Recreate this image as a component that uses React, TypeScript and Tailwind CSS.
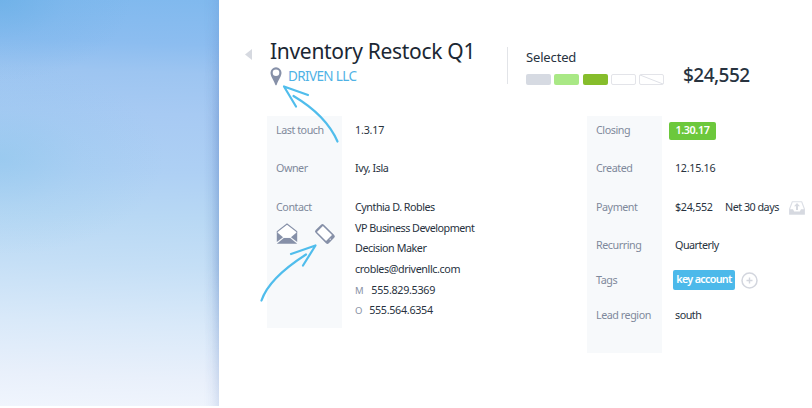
import type { ReactNode } from "react";

function Label({ children, className = "" }: { children: ReactNode; className?: string }) {
  return <div className={`h-5 whitespace-nowrap text-[10.75px] leading-5 tracking-[-0.46px] text-[#7f899c] ${className}`}>{children}</div>;
}

function Value({ children, className = "" }: { children: ReactNode; className?: string }) {
  return <div className={`flex h-5 items-center whitespace-nowrap text-[10.75px] leading-5 text-[#28323e] ${className}`}>{children}</div>;
}

function Pin() {
  return (
    <svg width="12" height="19" viewBox="0 0 12 19" className="shrink-0">
      <path fillRule="evenodd" fill="#8690a8" d="M6 .3A5.500 5.500 0 0 0 .5 5.800c0 3.400 2.800 6.700 4.800 12 .2.7 1.200.7 1.400 0 2-5.300 4.800-8.600 4.800-12A5.500 5.500 0 0 0 6 .3Zm0 2.200a3.300 3.300 0 1 1 0 6.600 3.300 3.300 0 0 1 0-6.600Z" />
    </svg>
  );
}

function Envelope() {
  return (
    <svg width="22" height="21" viewBox="0 0 22 21">
      <path d="M1.500 8.700 11 1l9.500 7.700-5.500 5.300H7Z" fill="#fff" />
      <path d="M1.300 9.500V8.500L11 1l9.700 7.500v1" fill="none" stroke="#8690a8" strokeWidth="1.100" />
      <path d="M.8 9 7 14.200.8 19ZM21.200 9 15 14.200l6.200 4.800ZM.8 20.700 7.800 15h6.400l7 5.700Z" fill="#8690a8" />
    </svg>
  );
}

function Phone() {
  return (
    <svg width="22" height="22" viewBox="0 0 22 22">
      <g transform="translate(11 11) rotate(-45)">
        <rect x="-5.800" y="-9.400" width="11.600" height="18.600" rx="2" fill="#8690a8" />
        <rect x="-4.200" y="-7.200" width="8.400" height="12.900" fill="#fff" />
        <circle cx="0" cy="7.400" r=".6" fill="#fff" />
      </g>
    </svg>
  );
}

function Tray() {
  return (
    <svg width="16" height="14" viewBox="0 0 16 14" className="mt-[2px] shrink-0">
      <path d="M3.300.7h9.400L15.400 8v5.300H.6V8Z" fill="#fff" stroke="#dcdfe6" strokeWidth="1.100" strokeLinejoin="round" />
      <path d="M.6 8.300H4l1.200 2.200h5.600L12 8.300h3.400v5H.6Z" fill="#d6d9e0" />
      <path d="M8 2 5 5.200h2V9h2V5.200h2Z" fill="#d6d9e0" />
    </svg>
  );
}

function AddTag() {
  return (
    <svg width="17" height="17" viewBox="0 0 17 17" className="ml-[6px] shrink-0">
      <circle cx="8.500" cy="8.500" r="7.500" fill="none" stroke="#d3d6de" strokeWidth="1.500" />
      <path d="M8.500 5.500v6M5.500 8.500h6" stroke="#d3d6de" strokeWidth="1.400" />
    </svg>
  );
}

export default function App() {
  return (
    <div className="relative flex h-[408px] w-[812px] overflow-hidden bg-white font-['Noto_Sans',sans-serif]">
      <aside className="flex h-[406px] w-[219px] shrink-0 justify-end bg-[radial-gradient(ellipse_60%_20%_at_0%_0%,#5fabe380_0%,#5fabe326_50%,#5fabe300_100%),radial-gradient(ellipse_75%_24%_at_0%_39%,#84c4ea73_0%,#84c4ea26_50%,#84c4ea00_100%),linear-gradient(182deg,#80b9ee_0%,#8cbdf0_11%,#9dc5f1_18%,#a7caf3_28%,#aed0f4_42%,#b8d8f4_53%,#c5dff6_65%,#d9e9f9_79%,#e9f0fb_92%,#f0f5fd_100%)]">
        <div className="w-[15px] bg-linear-to-r from-[#5078bc00] via-[#5078bc1a] to-[#5078bc5c] [mask-image:linear-gradient(to_bottom,#0005_0%,#000_30%,#000_65%,#0006_100%)]" />
      </aside>

      <main className="flex min-w-0 flex-1 flex-col">
        <header className="flex h-[116px]">
          <div className="ml-[26px] mt-[49px] h-[11px] w-[7px] bg-[#d6d9e0] [clip-path:polygon(100%_0,100%_100%,0_50%)]" />
          <div className="ml-[18px] w-[237px] pt-[36px]">
            <h1 className="h-[30px] whitespace-nowrap text-[21px] leading-[30px] tracking-[-0.3px] text-[#1b2733]">Inventory Restock Q1</h1>
            <div className="flex h-5 items-center gap-[6px]">
              <Pin />
              <span className="whitespace-nowrap text-[13.5px] leading-5 tracking-[-0.62px] text-[#4fb2e5]">DRIVEN LLC</span>
            </div>
          </div>
          <div className="mt-[47px] h-[37px] w-px bg-[#e2e4e8]" />
          <div className="ml-[18px] w-[157px] pt-[47px]">
            <div className="h-5 text-[13px] leading-5 tracking-[-0.15px] text-[#28333f]">Selected</div>
            <div className="mt-[7px] flex gap-[3.3px]">
              <div className="h-[11px] w-[25px] rounded-[2px] bg-[#d6dae2]" />
              <div className="h-[11px] w-[25px] rounded-[2px] bg-[#a9e885]" />
              <div className="h-[11px] w-[25px] rounded-[2px] bg-[#86bd2b]" />
              <div className="h-[11px] w-[25px] rounded-[2px] border border-[#e3e4e9]" />
              <div className="h-[11px] w-[25px] rounded-[2px] border border-[#e3e4e9]">
                <svg width="23" height="9" viewBox="0 0 23 9"><path d="M0 0 23 9" stroke="#dfe1e7" /></svg>
              </div>
            </div>
          </div>
          <div className="mt-[61px] whitespace-nowrap text-[19px] font-medium leading-7 tracking-[-0.55px] text-[#28333f]">$24,552</div>
        </header>

        <div className="flex pl-[48px]">
          <section className="flex w-[320px]">
            <div className="h-[212px] w-[75px] shrink-0 bg-[#f7f9fb] pl-[9px] pt-[4px]">
              <Label>Last touch</Label>
              <Label className="mt-[18px]">Owner</Label>
              <Label className="mt-[19px]">Contact</Label>
              <div className="mt-[6px] flex gap-[16px]">
                <Envelope />
                <Phone />
              </div>
            </div>
            <div className="pl-[13px] pt-[4px]">
              <Value className="tracking-[-0.2px]">1.3.17</Value>
              <Value className="mt-[18px] tracking-[-0.45px]">Ivy, Isla</Value>
              <Value className="mt-[19px] tracking-[-0.48px]">Cynthia D. Robles</Value>
              <Value className="mt-[1px] tracking-[-0.5px]">VP Business Development</Value>
              <Value className="tracking-[-0.45px]">Decision Maker</Value>
              <Value className="mt-[1px] tracking-[-0.4px]">crobles@drivenllc.com</Value>
              <Value className="mt-[1px] tracking-[-0.3px]"><span className="mr-[8px] pt-[2px] text-[9.5px] text-[#8992a4]">M</span>555.829.5369</Value>
              <Value className="tracking-[-0.3px]"><span className="mr-[7px] pt-[2px] text-[9.5px] text-[#8992a4]">O</span>555.564.6354</Value>
            </div>
          </section>

          <section className="flex">
            <div className="h-[237px] w-[75px] shrink-0 bg-[#f7f9fb] pl-[9px] pt-[4px]">
              <Label>Closing</Label>
              <Label className="mt-[18px]">Created</Label>
              <Label className="mt-[19px]">Payment</Label>
              <Label className="mt-[18px]">Recurring</Label>
              <Label className="mt-[15px]">Tags</Label>
              <Label className="mt-[15px]">Lead region</Label>
            </div>
            <div className="pl-[13px] pt-[4px]">
              <Value className="-ml-[6px] pt-[2px]">
                <span className="flex h-[18px] w-[47px] items-center justify-center rounded-[2px] bg-[#6cc83c] pb-[2px] font-semibold tracking-[-0.4px] text-white">1.30.17</span>
              </Value>
              <Value className="mt-[18px] tracking-[-0.3px]">12.15.16</Value>
              <Value className="mt-[19px]">
                <span className="w-[50px] tracking-[-0.3px]">$24,552</span>
                <span className="w-[64px] tracking-[-0.5px]">Net 30 days</span>
                <Tray />
              </Value>
              <Value className="mt-[18px] tracking-[-0.5px]">Quarterly</Value>
              <Value className="-ml-[2px] mt-[15px]">
                <span className="flex h-5 w-[62px] shrink-0 items-center justify-center rounded-[2px] bg-[#4cb9ea] pb-[2px] font-semibold tracking-[-0.68px] text-white">key account</span>
                <AddTag />
              </Value>
              <Value className="mt-[15px] tracking-[-0.5px]">south</Value>
            </div>
          </section>
        </div>
      </main>

      <svg width="812" height="408" viewBox="0 0 812 408" className="pointer-events-none absolute inset-0" fill="none" stroke="#50bdec" strokeWidth="2.200" strokeLinecap="round" strokeLinejoin="round">
        <path d="M308 95 284 86.500 296 106.500" />
        <path d="M293.500 96C312 107 329 122 337.500 141.500" />
        <path d="M291 254 315.500 245.500 303 265.500" />
        <path d="M306 254.500C288 266 268 281 261.500 300.500" />
      </svg>
    </div>
  );
}
